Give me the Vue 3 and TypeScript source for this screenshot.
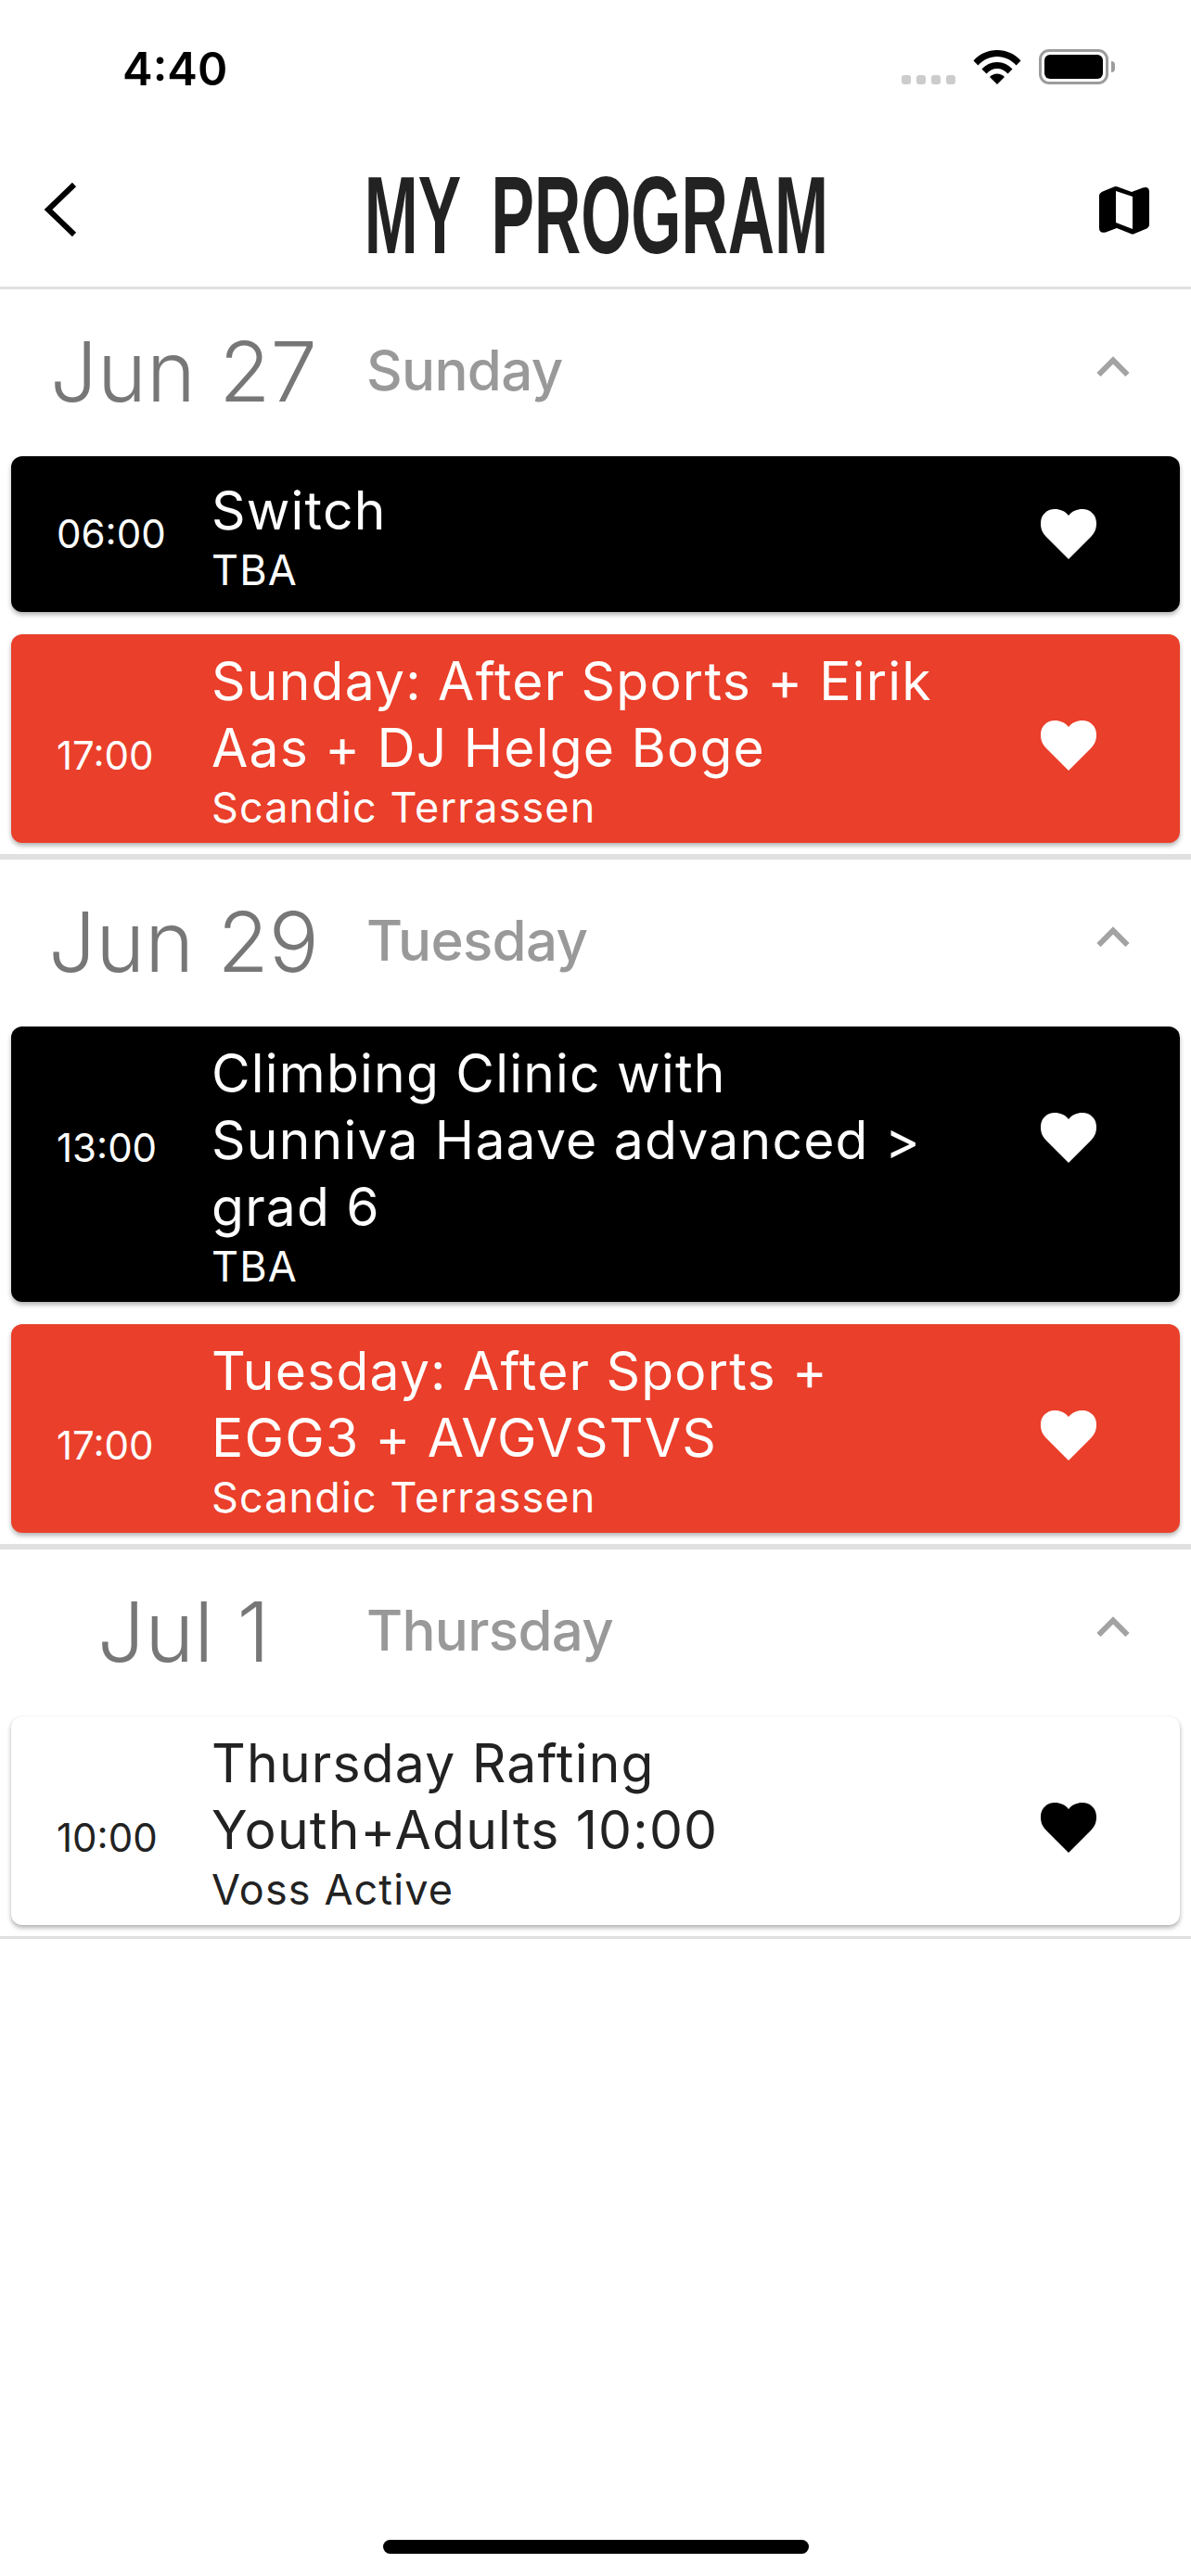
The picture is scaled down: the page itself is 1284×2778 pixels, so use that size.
<script setup lang="ts">
interface Item {
  time: string
  title: string[]
  place: string
  tone: 'dark' | 'red' | 'light'
  size: 'one' | 'multi'
}
interface Day {
  date: string
  weekday: string
  items: Item[]
  thin?: boolean
}
const days: Day[] = [
  {
    date: 'Jun 27',
    weekday: 'Sunday',
    items: [
      { time: '06:00', title: ['Switch'], place: 'TBA', tone: 'dark', size: 'one' },
      { time: '17:00', title: ['Sunday: After Sports + Eirik', 'Aas + DJ Helge Boge'], place: 'Scandic Terrassen', tone: 'red', size: 'multi' },
    ],
  },
  {
    date: 'Jun 29',
    weekday: 'Tuesday',
    items: [
      { time: '13:00', title: ['Climbing Clinic with', 'Sunniva Haave advanced >', 'grad 6'], place: 'TBA', tone: 'dark', size: 'multi' },
      { time: '17:00', title: ['Tuesday: After Sports +', 'EGG3 + AVGVSTVS'], place: 'Scandic Terrassen', tone: 'red', size: 'multi' },
    ],
  },
  {
    date: 'Jul 1',
    weekday: 'Thursday',
    thin: true,
    items: [
      { time: '10:00', title: ['Thursday Rafting', 'Youth+Adults 10:00'], place: 'Voss Active', tone: 'light', size: 'multi' },
    ],
  },
]
</script>

<template>
  <div class="screen">
    <div class="status">
      <span class="clock">4:40</span>
      <div class="status-icons">
        <div class="dots"><i></i><i></i><i></i><i></i></div>
        <svg class="wifi" width="52" height="38" viewBox="0 0 52 38">
          <path d="M0.5 12.5C7 5 16 1 26 1s19 4 25.500 11.500L46.500 17.500C41 11.500 34 8 26 8S11 11.500 5.500 17.500Z" />
          <path d="M9.500 21.500C13.500 17 19.500 14 26 14s12.500 3 16.500 7.500L37.500 26.500C34.500 23 30.500 21 26 21s-8.500 2-11.500 5.500Z" />
          <path d="M18 30C20 27.800 23 26.500 26 26.500s6 1.300 8 3.500L26 38Z" />
        </svg>
        <div class="battery"><div class="battery-fill"></div></div>
        <div class="battery-nub"></div>
      </div>
    </div>

    <header class="topbar">
      <svg class="back" width="36" height="58" viewBox="0 0 36 58">
        <path d="M33 2 5 29l28 27" fill="none" stroke="#000" stroke-width="6" />
      </svg>
      <h1 class="title"><span>MY PROGRAM</span></h1>
      <svg class="map" width="54" height="54" viewBox="0 0 54 54">
        <path fill-rule="evenodd" d="M5 7 16 2.500Q18 1.500 20 2.500L35 8 47 3.500Q54 1.500 54 8V43Q54 46.500 50 48L38 53Q36 54 34 53L19 47 7 51.500Q0 53 0 47V12Q0 9 5 7ZM18 7 V41 L36 48 V13Z" />
      </svg>
    </header>

    <section v-for="day in days" :key="day.date" class="day" :class="{ thin: day.thin }">
      <div class="day-head">
        <div class="date">{{ day.date }}</div>
        <div class="weekday">{{ day.weekday }}</div>
        <svg class="chev" width="36" height="22" viewBox="0 0 36 22">
          <path d="M2.500 20 18 4.500 33.500 20" fill="none" stroke="#a3a3a3" stroke-width="6" />
        </svg>
      </div>
      <div class="cards">
        <article v-for="item in day.items" :key="item.time + item.place" class="card" :class="[item.tone, item.size]">
          <div class="time">{{ item.time }}</div>
          <div class="body">
            <div v-for="line in item.title" :key="line" class="line">{{ line }}</div>
            <div class="place">{{ item.place }}</div>
          </div>
          <svg class="heart" width="60" height="54" viewBox="0 0 60 54">
            <path d="M30 54 6 30C0 24 0 18 0 15 0 6 7 0 15 0c6 0 11 2 15 7 4-5 9-7 15-7 8 0 15 6 15 15 0 3 0 9-6 15Z" />
          </svg>
        </article>
      </div>
    </section>

    <div class="home"></div>
  </div>
</template>

<style scoped>
.screen {
  position: relative;
  width: 1284px;
  height: 2778px;
  background: #fff;
  overflow: hidden;
  font-family: Inter, "Liberation Sans", sans-serif;
  color: #222;
}
.status {
  height: 132px;
  display: flex;
  justify-content: space-between;
  padding: 50px 82px 0 132px;
  box-sizing: border-box;
}
.clock {
  font-size: 49px;
  font-weight: 600;
  line-height: 50px;
  color: #000;
}
.status-icons {
  display: flex;
  align-items: flex-start;
  padding-top: 3px;
}
.dots {
  display: flex;
  gap: 6px;
  margin-top: 28px;
  margin-right: 19px;
}
.dots i {
  width: 10px;
  height: 10px;
  border-radius: 3px;
  background: #ccc;
}
.wifi {
  fill: #000;
  margin-right: 19px;
}
.battery {
  box-sizing: border-box;
  width: 75px;
  height: 38px;
  border: 3px solid #9c9c9c;
  border-radius: 11px;
  padding: 3px;
}
.battery-fill {
  height: 100%;
  background: #000;
  border-radius: 6px;
}
.battery-nub {
  width: 4px;
  height: 12px;
  margin: 13px 0 0 3px;
  background: #9c9c9c;
  border-radius: 0 4px 4px 0;
}
.topbar {
  height: 180px;
  box-sizing: border-box;
  border-bottom: 3px solid #e0e0e0;
  display: grid;
  grid-template-columns: 1fr auto 1fr;
  align-items: center;
  padding: 0 45px 0 47px;
}
.back {
  margin-top: 10px;
}
.map {
  fill: #000;
  margin-top: 10px;
  justify-self: end;
}
.title {
  margin: 22px 0 0;
  font-family: "Liberation Sans", sans-serif;
  font-size: 118px;
  font-weight: 700;
  line-height: 120px;
  color: #222;
  white-space: nowrap;
  word-spacing: 24px;
}
.title span {
  display: inline-block;
  transform: scaleX(0.59);
}
.day {
  border-bottom: 6px solid #e0e0e0;
  padding-bottom: 12px;
}
.day.thin {
  border-bottom-width: 3px;
}
.day-head {
  height: 180px;
  display: flex;
  align-items: center;
  position: relative;
}
.date {
  width: 396px;
  text-align: center;
  font-size: 90px;
  font-weight: 300;
  color: #777;
  line-height: 100px;
  margin-top: -3px;
}
.weekday {
  font-size: 60px;
  font-weight: 500;
  letter-spacing: -0.7px;
  color: #999;
  line-height: 70px;
  margin-top: -7px;
  margin-left: -1px;
}
.chev {
  position: absolute;
  right: 66px;
  top: 72px;
}
.cards {
  display: flex;
  flex-direction: column;
  gap: 24px;
  padding: 0 12px;
}
.card {
  display: flex;
  align-items: flex-start;
  border-radius: 12px;
  box-shadow: 0 3px 5px rgba(0, 0, 0, 0.3);
  color: #fff;
  padding-left: 49px;
}
.card.dark {
  background: #000;
}
.card.red {
  background: #ea3f2a;
}
.card.light {
  background: #fff;
  color: #222;
  box-shadow: 0 3px 5px rgba(0, 0, 0, 0.3), 0 0 2px rgba(0, 0, 0, 0.05);
}
.card.one {
  padding-top: 23px;
  padding-bottom: 20px;
}
.card.multi {
  padding-top: 15px;
  padding-bottom: 13px;
}
.time {
  width: 167px;
  flex: none;
  font-size: 42px;
  line-height: 50px;
}
.one .time {
  margin-top: 36px;
}
.multi .time {
  margin-top: 91px;
}
.body {
  flex: 1;
}
.line {
  font-size: 57px;
  line-height: 72px;
  letter-spacing: 1.2px;
  white-space: nowrap;
}
.place {
  font-size: 45px;
  line-height: 50px;
  letter-spacing: 1.1px;
  margin-top: 3px;
}
.heart {
  flex: none;
  margin-right: 90px;
}
.one .heart {
  fill: #fff;
  margin-top: 34px;
}
.multi .heart {
  margin-top: 78px;
  fill: #fff;
}
.light .heart {
  fill: #000;
}
.home {
  position: absolute;
  left: 413px;
  bottom: 24px;
  width: 459px;
  height: 15px;
  border-radius: 8px;
  background: #000;
}
</style>
